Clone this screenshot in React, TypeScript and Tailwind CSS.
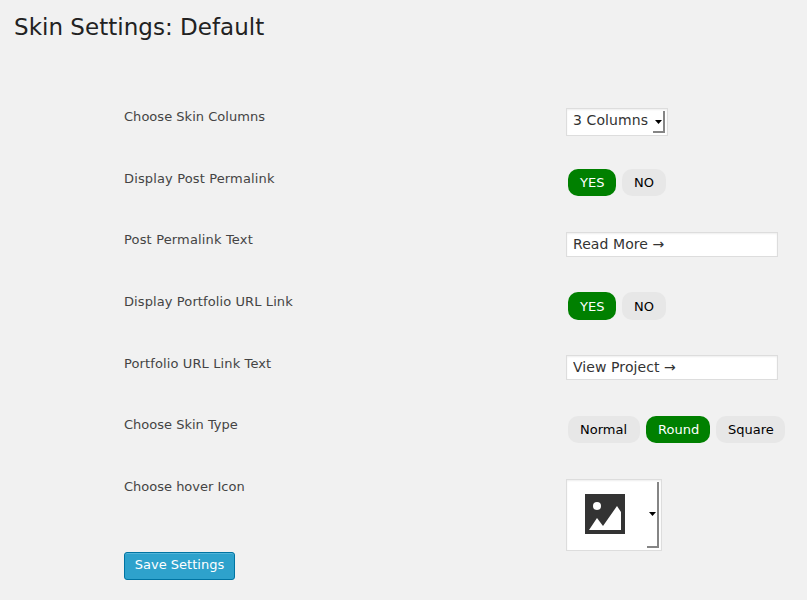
import React from "react";

type RowProps = { label: string; height: string; tracking?: string; children: React.ReactNode };

function Row({ label, height, tracking = "", children }: RowProps) {
  return (
    <div className={`flex items-start ${height}`}>
      <div className={`w-[442px] shrink-0 text-[13px] leading-[18px] text-[#444] ${tracking}`}>{label}</div>
      {children}
    </div>
  );
}

type Option = { label: string; width: string };

const yesNo: Option[] = [
  { label: "YES", width: "w-12" },
  { label: "NO", width: "w-11" },
];

const skinTypes: Option[] = [
  { label: "Normal", width: "w-[72px]" },
  { label: "Round", width: "w-16" },
  { label: "Square", width: "w-[69px]" },
];

function Choice({ options, active, className }: { options: Option[]; active: string; className: string }) {
  return (
    <div className={`ml-0.5 flex gap-1.5 ${className}`}>
      {options.map((o) => (
        <button
          key={o.label}
          className={`flex h-full items-start rounded-[10px] pl-3 text-[13px] leading-[27px] whitespace-nowrap ${o.width} ${
            o.label === active ? "bg-[#008000] text-white" : "bg-[#e7e7e7] text-black"
          }`}
        >
          {o.label}
        </button>
      ))}
    </div>
  );
}

function TextInput({ value, className = "" }: { value: string; className?: string }) {
  return (
    <input
      readOnly
      value={value}
      className={`h-[25px] w-[212px] border border-[#ddd] bg-white pb-0.5 pl-1.5 text-[14px] tracking-[0.08px] text-[#333] shadow-[inset_0_1px_2px_rgba(0,0,0,0.07)] outline-none ${className}`}
    />
  );
}

function Caret() {
  return (
    <svg width="7" height="4" viewBox="0 0 7 4" className="shrink-0">
      <path d="M0 0h7L3.5 4z" fill="#000" />
    </svg>
  );
}

export default function App() {
  return (
    <div className="h-[600px] w-[807px] overflow-hidden bg-[#f1f1f1] font-['DejaVu_Sans',sans-serif]">
      <h1 className="h-[108px] pt-[13px] pl-3.5 text-[23px] leading-[29px] tracking-[0.03px] text-[#222]">
        Skin Settings: Default
      </h1>
      <div className="pl-[124px]">
        <Row label="Choose Skin Columns" height="h-[62px]" tracking="tracking-[0.03px]">
          <div className="flex h-7 w-[102px] justify-between border border-[#ddd] bg-white pt-0.5 pr-0.5 pl-1.5 shadow-[inset_0_1px_2px_rgba(0,0,0,0.07)]">
            <span className="text-[14px] leading-[19px] tracking-[0.1px] whitespace-nowrap text-[#333]">3 Columns</span>
            <span className="flex h-[22px] w-3 shrink-0 items-center justify-center border-r-2 border-b-2 border-[#858585] pt-0.5">
              <Caret />
            </span>
          </div>
        </Row>
        <Row label="Display Post Permalink" height="h-[61px]" tracking="tracking-[0.14px]">
          <Choice options={yesNo} active="YES" className="-mt-px h-[27px]" />
        </Row>
        <Row label="Post Permalink Text" height="h-[62px]" tracking="tracking-[0.16px]">
          <TextInput value="Read More →" className="mt-px" />
        </Row>
        <Row label="Display Portfolio URL Link" height="h-[62px]" tracking="tracking-[0.1px]">
          <Choice options={yesNo} active="YES" className="-mt-px h-7 *:pt-px" />
        </Row>
        <Row label="Portfolio URL Link Text" height="h-[61px]" tracking="tracking-[0.12px]">
          <TextInput value="View Project →" />
        </Row>
        <Row label="Choose Skin Type" height="h-[62px]">
          <Choice options={skinTypes} active="Round" className="h-[27px]" />
        </Row>
        <Row label="Choose hover Icon" height="h-[74px]">
          <div className="mt-px flex h-[72px] w-[96px] justify-between border border-[#ddd] bg-white pt-0.5 pr-0.5 pl-[18px] shadow-[inset_0_1px_2px_rgba(0,0,0,0.07)]">
            <svg width="40" height="40" viewBox="0 0 40 40" className="mt-3 shrink-0">
              <path d="M0 0h40v40H0z" fill="#333" />
              <circle cx="12" cy="12" r="4" fill="#fff" />
              <path d="M4 36l8-12 6 8L32 12l4 6v18z" fill="#fff" />
            </svg>
            <span className="flex h-[66px] w-3 shrink-0 items-center justify-center border-r-2 border-b-2 border-[#858585]">
              <Caret />
            </span>
          </div>
        </Row>
        <button className="block h-7 w-[111px] rounded-[3px] border border-[#0074a2] bg-[#2ea2cc] pb-[3px] text-[13px] leading-[23px] whitespace-nowrap text-white shadow-[inset_0_1px_0_rgba(120,200,230,0.5)]">
          Save Settings
        </button>
      </div>
    </div>
  );
}
